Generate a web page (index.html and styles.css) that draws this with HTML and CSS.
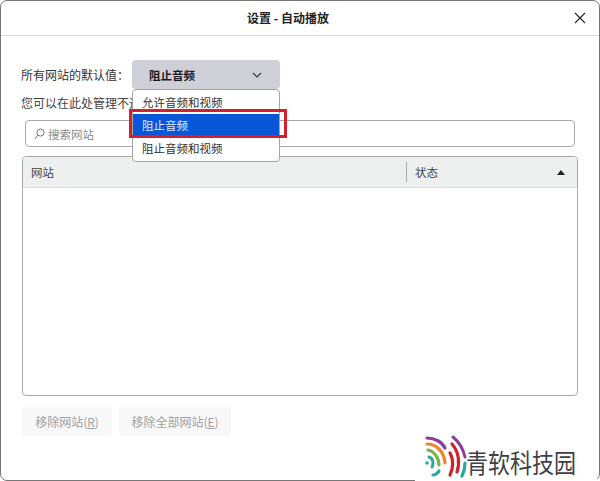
FILE: index.html
```html
<!DOCTYPE html>
<html lang="zh-CN">
<head>
<meta charset="utf-8">
<title>设置 - 自动播放</title>
<link rel="stylesheet" href="styles.css">
</head>
<body>
<div class="dialog">
  <header class="titlebar">
    <h1 class="title">设置 - 自动播放</h1>
    <svg class="close" width="12" height="12" viewBox="0 0 12 12"><path d="M1 1l10 10M11 1L1 11" stroke="#222" stroke-width="1.1" fill="none"/></svg>
  </header>
  <main class="content">
    <div class="default-row">
      <span class="default-label">所有网站的默认值：</span>
      <div class="select">
        <span>阻止音频</span>
        <svg width="10" height="6" viewBox="0 0 10 6"><path d="M1 1l4 4 4-4" stroke="#333" stroke-width="1.1" fill="none"/></svg>
      </div>
    </div>
    <p class="hint">您可以在此处管理不遵循默认设置的网站。</p>
    <div class="search">
      <svg width="11" height="12" viewBox="0 0 11 12"><circle cx="6.5" cy="4.5" r="3.6" stroke="#777" fill="none"/><path d="M3.8 7.2L1 11" stroke="#777" fill="none"/></svg>
      <span>搜索网站</span>
    </div>
    <section class="table">
      <div class="table-head">
        <span class="col-site">网站</span>
        <span class="col-status">状态</span>
        <svg class="sort" width="8" height="5" viewBox="0 0 8 5"><path d="M4 0l4 5H0z" fill="#222"/></svg>
      </div>
    </section>
    <div class="actions">
      <span class="btn btn-one">移除网站(<u>R</u>)</span>
      <span class="btn btn-all">移除全部网站(<u>E</u>)</span>
    </div>
    <ul class="menu">
      <li>允许音频和视频</li>
      <li class="selected">阻止音频</li>
      <li>阻止音频和视频</li>
    </ul>
    <div class="highlight"></div>
  </main>
</div>
<div class="brand">
  <svg class="brand-logo" width="42" height="43" viewBox="0 0 42 43" fill="none" stroke-linecap="round">
    <path d="M2 3C10 3 17 7 20 13" stroke="#8a3f9d" stroke-width="3.2"/>
    <path d="M2 9C11 9 19 16 20 28" stroke="#e8892f" stroke-width="3.2"/>
    <path d="M3 15C9 16 14 23 14 30" stroke="#7db544" stroke-width="3.2"/>
    <path d="M4 22C8 23 9 28 7 32" stroke="#2aa7a0" stroke-width="3"/>
    <circle cx="2" cy="28" r="1.8" fill="#2aa7a0"/>
    <path d="M8 40C10 40 13 38 14 36" stroke="#2aa7a0" stroke-width="3.2"/>
    <path d="M25 18C29 25 28 34 25 40" stroke="#c9252d" stroke-width="3.2"/>
    <path d="M27 9C34 17 35 28 32 37" stroke="#c9252d" stroke-width="3.2"/>
    <path d="M28 2C34 7 38 13 40 22" stroke="#8a3f9d" stroke-width="3"/>
    <path d="M40 28C40 33 39 37 37 41" stroke="#2aa7a0" stroke-width="3.2"/>
  </svg>
  <span class="brand-name">青软科技园</span>
</div>
</body>
</html>
```
FILE: styles.css
```css
* { box-sizing: border-box; }
html, body { margin: 0; padding: 0; }
body {
  width: 600px;
  height: 481px;
  background: #fff;
  overflow: hidden;
  position: relative;
  font-family: "Noto Sans CJK SC", "Liberation Sans", sans-serif;
  color: #2b2b2b;
}
.dialog {
  width: 600px;
  height: 481px;
  background: #fff;
  border: 1px solid #777;
  border-radius: 7px;
  display: flex;
  flex-direction: column;
}
.titlebar {
  height: 35px;
  flex: none;
  border-bottom: 1px solid #dcdcdc;
  display: flex;
  align-items: center;
  justify-content: center;
  position: relative;
  padding: 0 24px 2px 0;
}
.title {
  margin: 0;
  font-size: 12px;
  font-weight: 700;
  color: #222;
}
.close {
  position: absolute;
  right: 13px;
  top: 11px;
}
.content {
  flex: 1;
  position: relative;
  padding: 24px 19px 0 20px;
  display: flex;
  flex-direction: column;
}
.default-row {
  display: flex;
  align-items: center;
  height: 29px;
}
.default-label {
  width: 111px;
  flex: none;
  font-size: 12px;
  color: #333;
  white-space: nowrap;
  overflow: hidden;
}
.select {
  width: 148px;
  height: 29px;
  flex: none;
  background: #cfcfd8;
  border-radius: 4px;
  display: flex;
  align-items: center;
  justify-content: space-between;
  padding: 0 18px 0 17px;
  font-size: 11.5px;
  font-weight: 700;
  color: #1c1b22;
}
.hint {
  margin: 4px 0 0;
  height: 20px;
  line-height: 20px;
  font-size: 12px;
  color: #444;
  white-space: nowrap;
}
.search {
  margin: 7px 0 0 4px;
  width: 550px;
  height: 27px;
  border: 1px solid #a9a9a9;
  border-radius: 4px;
  display: flex;
  align-items: center;
  gap: 3px;
  padding-left: 8px;
  font-size: 11.5px;
  color: #8a8a8a;
}
.table {
  margin: 9px 0 0 1px;
  width: 556px;
  height: 240px;
  border: 1px solid #a9a9a9;
  border-radius: 4px;
  overflow: hidden;
}
.table-head {
  height: 31px;
  background: #eeefef;
  border-bottom: 1px solid #dedede;
  display: flex;
  align-items: center;
  font-size: 11.5px;
  color: #444;
}
.col-site {
  width: 384px;
  padding-left: 8px;
  border-right: 1px solid #a9a9a9;
  height: 20px;
  line-height: 20px;
}
.col-status {
  padding-left: 8px;
  flex: 1;
}
.sort { margin-right: 12px; }
.actions {
  display: flex;
  gap: 7px;
  margin: 11px 0 0 1px;
}
.btn {
  height: 29px;
  background: #f8f8f9;
  border-radius: 4px;
  display: flex;
  align-items: center;
  justify-content: center;
  font-size: 12px;
  color: #a0a0a0;
}
.btn-one { width: 90px; }
.btn-all { width: 112px; }
.menu {
  position: absolute;
  left: 131px;
  top: 53px;
  width: 148px;
  margin: 0;
  padding: 1px 0;
  list-style: none;
  background: #fff;
  border: 1px solid #a4a4a4;
  border-radius: 4px;
  font-size: 11.5px;
  color: #333;
}
.menu li {
  height: 23px;
  line-height: 22px;
  padding-left: 9px;
}
.menu .selected {
  background: #0a56d8;
  color: #dfeaff;
}
.highlight {
  position: absolute;
  left: 128px;
  top: 73px;
  width: 158px;
  height: 29px;
  border: 3px solid #d2202c;
}
.brand {
  position: absolute;
  right: 3px;
  bottom: 0;
  width: 182px;
  height: 49px;
  background: #fff;
  display: flex;
  align-items: flex-start;
  padding: 3px 0 0 10px;
}
.brand-logo { flex: none; }
.brand-name {
  font-size: 22px;
  line-height: 28px;
  margin: 9px 0 0 -1px;
  color: #3f3f46;
  white-space: nowrap;
  transform: scaleY(1.2);
  transform-origin: top left;
}
```
